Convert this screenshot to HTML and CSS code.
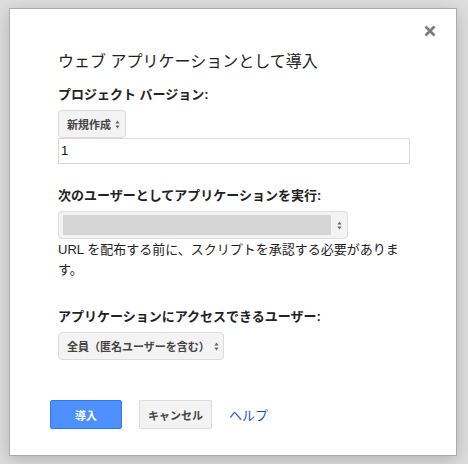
FILE: index.html
```html
<!DOCTYPE html>
<html lang="ja">
<head>
<meta charset="utf-8">
<link rel="stylesheet" href="styles.css">
</head>
<body>
<div class="dialog">
  <div class="close">
    <svg width="12" height="12" viewBox="0 0 12 12"><path d="M1.5 1.5L10.5 10.5M10.5 1.5L1.5 10.5" stroke="#7a7a7a" stroke-width="2.6"/></svg>
  </div>
  <div class="content">
    <div class="title">ウェブ アプリケーションとして導入</div>
    <div class="label l1">プロジェクト バージョン:</div>
    <div class="select s1">新規作成<span class="arrows"><svg width="5" height="9" viewBox="0 0 5 9"><path d="M2.5 0.5L4.6 3.5H0.4Z M2.5 8.5L4.6 5.5H0.4Z" fill="#666"/></svg></span></div>
    <div class="input">1</div>
    <div class="label l2">次のユーザーとしてアプリケーションを実行:</div>
    <div class="select s2"><span class="fill"></span><span class="arrows"><svg width="5" height="9" viewBox="0 0 5 9"><path d="M2.5 0.5L4.6 3.5H0.4Z M2.5 8.5L4.6 5.5H0.4Z" fill="#666"/></svg></span></div>
    <p class="note">URL を配布する前に、スクリプトを承認する必要があります。</p>
    <div class="label l3">アプリケーションにアクセスできるユーザー:</div>
    <div class="select s3">全員（匿名ユーザーを含む）<span class="arrows"><svg width="5" height="9" viewBox="0 0 5 9"><path d="M2.5 0.5L4.6 3.5H0.4Z M2.5 8.5L4.6 5.5H0.4Z" fill="#666"/></svg></span></div>
  </div>
  <div class="buttons">
    <div class="btn primary">導入</div>
    <div class="btn">キャンセル</div>
    <a class="help" href="#">ヘルプ</a>
  </div>
</div>
</body>
</html>
```

FILE: styles.css
```css
html, body {
  margin: 0;
  padding: 0;
}
body {
  background: #dedede;
  width: 468px;
  height: 464px;
  padding-top: 8px;
  box-sizing: border-box;
  font-family: "Liberation Sans", Arial, "Noto Sans CJK JP", sans-serif;
  color: #222;
}
.dialog {
  position: relative;
  margin-left: 9px;
  width: 448px;
  height: 448px;
  box-sizing: border-box;
  background: #fff;
  border: 1px solid #acacac;
  box-shadow: 0 4px 16px rgba(0,0,0,0.2);
}
.close {
  position: absolute;
  left: 414px;
  top: 16px;
  width: 12px;
  height: 12px;
}
.close svg { display: block; }
.content {
  padding: 43px 0 0 48px;
  width: 351px;
  display: flex;
  flex-direction: column;
  align-items: flex-start;
}
.title {
  font-size: 16px;
  line-height: 20px;
  color: #222;
}
.label {
  font-size: 13px;
  font-weight: bold;
  line-height: 16px;
  color: #222;
}
.l1 { margin-top: 15px; }
.l2 { margin-top: 24px; }
.l3 { margin-top: 29px; }
.select {
  box-sizing: border-box;
  height: 28px;
  border: 1px solid #dcdcdc;
  border-radius: 4px;
  background: #f3f3f3;
  font-size: 11px;
  font-weight: bold;
  color: #444;
  display: flex;
  align-items: center;
  padding: 0 5px 0 8px;
  white-space: nowrap;
}
.arrows {
  display: flex;
  align-items: center;
  margin-left: 4px;
  flex: none;
}
.arrows svg { display: block; }
.s1 { margin-top: 7px; }
.s2 {
  margin-top: 7px;
  width: 290px;
  padding: 0 5px 0 4px;
  justify-content: space-between;
}
.s2 .fill {
  width: 268px;
  height: 20px;
  background: #d6d6d6;
}
.s3 { margin-top: 7px; width: 166px; justify-content: space-between; }
.input {
  box-sizing: border-box;
  width: 352px;
  height: 26px;
  border: 1px solid #d9d9d9;
  font-size: 13px;
  line-height: 24px;
  padding-left: 2px;
  color: #111;
}
.note {
  margin: 1px 0 0 0;
  font-size: 13px;
  line-height: 20px;
  color: #222;
  width: 351px;
}
.buttons {
  display: flex;
  align-items: center;
  margin: 40px 0 0 40px;
}
.btn {
  box-sizing: border-box;
  height: 29px;
  min-width: 72px;
  padding: 0 8px;
  border: 1px solid #dcdcdc;
  border-radius: 2px;
  background: #f3f3f3;
  font-size: 11px;
  font-weight: bold;
  color: #444;
  display: flex;
  align-items: center;
  justify-content: center;
  margin-right: 17px;
}
.btn.primary {
  background: #4d90fe;
  border-color: #3079ed;
  color: #fff;
  width: 72px;
}
.help {
  font-size: 13px;
  color: #15c;
  text-decoration: none;
}
```
